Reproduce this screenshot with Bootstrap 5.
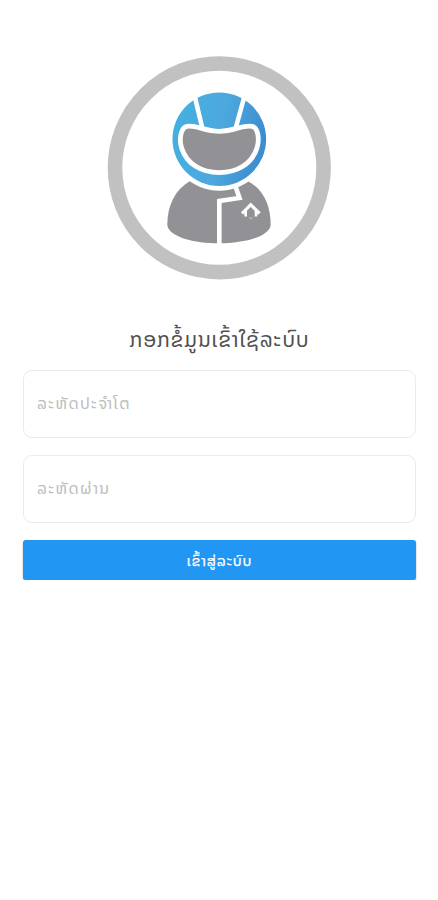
<!DOCTYPE html>
<html lang="lo">
<head>
<meta charset="utf-8">
<meta name="viewport" content="width=device-width, initial-scale=1">
<title>ເຂົ້າສູ່ລະບົບ</title>
<link href="https://cdn.jsdelivr.net/npm/bootstrap@5.3.0/dist/css/bootstrap.min.css" rel="stylesheet">
<style>
body { font-family: "Noto Sans Lao", "DejaVu Sans", sans-serif; background: #fff; }
.login-page { padding: 56px 22px 0 23px; }
.login-emblem { margin-left: 84px; }
.login-title { font-size: 21px; line-height: 32px; margin: 44px 0 14px; color: #505050; white-space: nowrap; letter-spacing: .75px; }
.login-field { height: 68px; border: 1.5px solid #eaeaea; border-radius: 9px; padding: 0 13px 2px; font-size: 16px; letter-spacing: 1.3px; margin-bottom: 16.500px; }
.login-field::placeholder { color: #bdbdbd; }
.login-btn { height: 40px; background: #2196f3; color: #fff; border: 0; border-radius: 3px; font-size: 14.500px; letter-spacing: .8px; padding: 3px 0 0; margin-top: 1px; -webkit-text-stroke: .25px #fff; box-shadow: 0 1px 2px rgba(0,0,0,.35); }
</style>
</head>
<body>
<main class="login-page d-flex flex-column">
  <svg class="login-emblem d-block" width="224" height="224" viewBox="107 56 224 224" aria-hidden="true">
    <defs>
      <linearGradient id="helmet" x1="0" x2="1" y1="0.4" y2="0.6">
        <stop offset="0" stop-color="#43b0e0"/><stop offset=".5" stop-color="#4da8de"/><stop offset="1" stop-color="#3b8bce"/>
      </linearGradient>
    </defs>
    <circle cx="219.3" cy="167.8" r="104.3" fill="#fff" stroke="#c1c1c2" stroke-width="14.6"/>
    <path d="M190 181C175 190 167.300 205 167.300 225C169 237 194 243.300 219 243.300S269 237 270.700 225C270.700 205 263 189 247.700 181Z" fill="#929296"/>
    <circle cx="219.300" cy="139.200" r="51.500" fill="#fff"/>
    <path d="M235 185L239.500 197.900L219.300 201V245" fill="none" stroke="#fff" stroke-width="4.600"/>
    <circle cx="219.300" cy="139.200" r="46.800" fill="url(#helmet)"/>
    <path d="M193.200 90L202.300 128M246.200 90L235.700 128" fill="none" stroke="#fff" stroke-width="4.600"/>
    <path d="M187 126.300C196 124.500 204 131.300 219.300 131.300S242.500 124.500 252 126.300C258.500 127.500 259.500 140 257 148C252 164 237 172.600 219.300 172.600S186.500 164 181.600 148C179 140 180.500 127.500 187 126.300Z" fill="#929296" stroke="#fff" stroke-width="4.800"/>
    <path d="M242 213.500L250.700 204.700L259.500 213.500" fill="none" stroke="#fff" stroke-width="3.200"/>
    <path d="M245.700 211V216.500M256 211V216.500" fill="none" stroke="#fff" stroke-width="2.600"/>
    <path d="M249.300 217.500L250.700 218.800L252.200 217.500" fill="none" stroke="#d5d5d7" stroke-width="1"/>
  </svg>
  <h1 class="login-title text-center fw-normal">ກອກຂໍ້ມູນເຂົ້າໃຊ້ລະບົບ</h1>
  <form class="d-flex flex-column">
    <input class="form-control login-field" type="text" placeholder="ລະຫັດປະຈຳໂຕ" aria-label="ລະຫັດປະຈຳໂຕ">
    <input class="form-control login-field" type="password" placeholder="ລະຫັດຜ່ານ" aria-label="ລະຫັດຜ່ານ">
    <button class="btn login-btn w-100" type="button">ເຂົ້າສູ່ລະບົບ</button>
  </form>
</main>
<script src="https://cdn.jsdelivr.net/npm/bootstrap@5.3.0/dist/js/bootstrap.bundle.min.js"></script>
</body>
</html>
